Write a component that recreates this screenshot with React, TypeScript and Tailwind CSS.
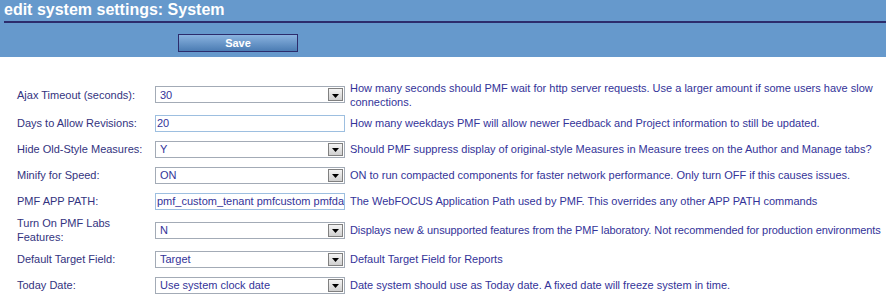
const font = { fontFamily: '"Liberation Sans", Arial, sans-serif' };

type Row = {
  label: string;
  kind: "select" | "input";
  value: string;
  desc: string;
  h: string;
  tight?: boolean;
};

const rows: Row[] = [
  {
    label: "Ajax Timeout (seconds):",
    kind: "select",
    value: "30",
    desc: "How many seconds should PMF wait for http server requests. Use a larger amount if some users have slow connections.",
    h: "h-[31px]",
  },
  {
    label: "Days to Allow Revisions:",
    kind: "input",
    value: "20",
    desc: "How many weekdays PMF will allow newer Feedback and Project information to still be updated.",
    h: "h-[26px]",
  },
  {
    label: "Hide Old-Style Measures:",
    kind: "select",
    value: "Y",
    desc: "Should PMF suppress display of original-style Measures in Measure trees on the Author and Manage tabs?",
    h: "h-[26px]",
  },
  {
    label: "Minify for Speed:",
    kind: "select",
    value: "ON",
    desc: "ON to run compacted components for faster network performance. Only turn OFF if this causes issues.",
    h: "h-[26px]",
  },
  {
    label: "PMF APP PATH:",
    kind: "input",
    value: "pmf_custom_tenant pmfcustom pmfdat",
    desc: "The WebFOCUS Application Path used by PMF. This overrides any other APP PATH commands",
    h: "h-[26px]",
  },
  {
    label: "Turn On PMF Labs Features:",
    kind: "select",
    value: "N",
    desc: "Displays new & unsupported features from the PMF laboratory. Not recommended for production environments",
    h: "h-[32px]",
    tight: true,
  },
  {
    label: "Default Target Field:",
    kind: "select",
    value: "Target",
    desc: "Default Target Field for Reports",
    h: "h-[26px]",
  },
  {
    label: "Today Date:",
    kind: "select",
    value: "Use system clock date",
    desc: "Date system should use as Today date. A fixed date will freeze system in time.",
    h: "h-[26px]",
  },
];

function FakeSelect({ value }: { value: string }) {
  return (
    <div className="flex h-[17px] w-[190px] shrink-0 items-center border border-[#a3abb6] bg-white">
      <span className="flex-1 truncate pl-[4px] leading-[14px]">{value}</span>
      <span className="mr-[1px] flex h-[13px] w-[15px] items-center justify-center border border-[#808080] bg-gradient-to-b from-[#f4f4f4] to-[#d0d0d0]">
        <svg width="7" height="4" viewBox="0 0 7 4" className="mt-[2px]">
          <path d="M0 0h7L3.5 4z" fill="#000" />
        </svg>
      </span>
    </div>
  );
}

function FakeInput({ value }: { value: string }) {
  return (
    <div className="flex h-[17px] w-[190px] shrink-0 items-center overflow-hidden whitespace-nowrap border border-[#9dbfe0] bg-white pl-[1px] leading-[14px]">
      {value}
    </div>
  );
}

export default function App() {
  return (
    <div className="h-[296px] w-[886px] overflow-hidden bg-white text-[11px] text-[#333399]" style={font}>
      <div className="h-[57px] bg-[#6699cc]">
        <div className="ml-[4px] h-[23px] border-b-2 border-[#2c2c6c]">
          <h1 className="text-[16px] font-bold leading-[20px] text-white">edit system settings: System</h1>
        </div>
        <div className="ml-[178px] mt-[11px]">
          <button className="h-[18px] w-[120px] border border-[#2c2c6c] bg-gradient-to-b from-[#8ab3df] to-[#4b7cb3] text-[11px] font-bold leading-[16px] text-white">
            Save
          </button>
        </div>
      </div>

      <div className="pt-[22px] pl-[17px]">
        {rows.map((r) => (
          <div key={r.label} className={`flex items-center gap-[4px] ${r.h}`}>
            <div className="w-[134px] shrink-0 leading-[14px] text-[#333380]">{r.label}</div>
            {r.kind === "select" ? <FakeSelect value={r.value} /> : <FakeInput value={r.value} />}
            <div
              className={`ml-[1px] w-[534px] leading-[14px] ${r.tight ? "whitespace-nowrap tracking-[-0.08px]" : ""}`}
            >
              {r.desc}
            </div>
          </div>
        ))}
      </div>
    </div>
  );
}
